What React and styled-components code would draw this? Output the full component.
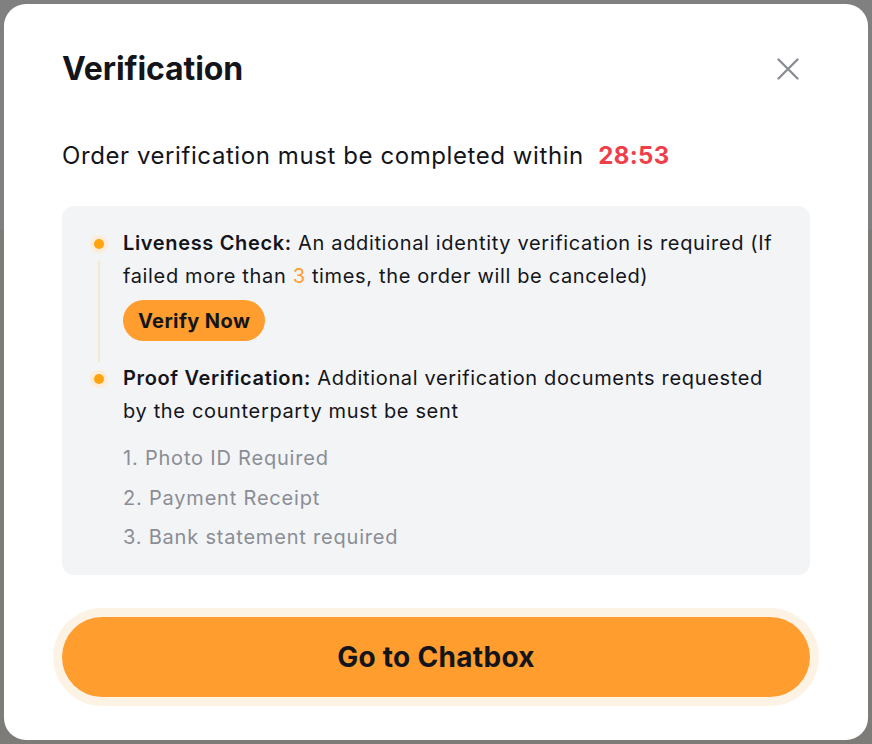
import React from "react";
import styled, { createGlobalStyle } from "styled-components";

const Global = createGlobalStyle`
  html, body { margin: 0; padding: 0; }
  body {
    background: #808080;
    font-family: Inter, "Noto Sans", "Liberation Sans", sans-serif;
    -webkit-font-smoothing: antialiased;
  }
`;

const Backdrop = styled.div`
  width: 872px;
  height: 744px;
  box-sizing: border-box;
  padding: 4px;
  background: linear-gradient(#808080 0 230px, #7e7c79 230px);
`;

const Modal = styled.div`
  width: 864px;
  height: 736px;
  box-sizing: border-box;
  background: #ffffff;
  border-radius: 22px;
  padding: 45px 58px 0 58px;
  display: flex;
  flex-direction: column;
  color: #14151a;
`;

const Header = styled.div`
  display: flex;
  align-items: center;
  justify-content: space-between;
  height: 40px;
`;

const Title = styled.h2`
  margin: 0;
  font-size: 32px;
  line-height: 40px;
  font-weight: 700;
  letter-spacing: -0.1px;
`;

const CloseButton = styled.button`
  width: 32px;
  height: 32px;
  margin-right: 6px;
  padding: 0;
  border: 0;
  background: transparent;
  display: flex;
  align-items: center;
  justify-content: center;
  cursor: pointer;
`;

const Subtitle = styled.p`
  margin: 51px 0 0 0;
  font-size: 24px;
  line-height: 32px;
  font-weight: 400;
  letter-spacing: 0.58px;
`;

const Timer = styled.span`
  color: #ef3f4a;
  font-weight: 700;
  margin-left: 7px;
  letter-spacing: 0.4px;
`;

const InfoBox = styled.div`
  margin-top: 34px;
  background: #f3f4f6;
  border-radius: 12px;
  padding: 21px 28px 17px 28px;
  display: flex;
  flex-direction: column;
`;

const Step = styled.div`
  display: flex;
  gap: 15px;
  padding-bottom: ${(p) => (p.$last ? 0 : 21)}px;
`;

const Rail = styled.div`
  width: 18px;
  flex: none;
  display: flex;
  flex-direction: column;
  align-items: center;
`;

const Dot = styled.span`
  margin-top: 7.5px;
  width: 18px;
  height: 18px;
  border-radius: 50%;
  background: #fcecd8;
  display: flex;
  align-items: center;
  justify-content: center;
  flex: none;
  &::after {
    content: "";
    width: 10px;
    height: 10px;
    border-radius: 50%;
    background: #ffa30f;
  }
`;

const Line = styled.span`
  flex: 1;
  width: 2px;
  margin-top: 8px;
  margin-bottom: -21px;
  background: #f6e7d2;
`;

const StepBody = styled.div`
  flex: 1;
  font-size: 20px;
  line-height: 33px;
  color: #14151a;
  letter-spacing: 0.65px;
`;

const Label = styled.strong`
  font-weight: 600;
`;

const Accent = styled.span`
  color: #ff9d2e;
`;

const VerifyButton = styled.button`
  margin-top: 7px;
  height: 41px;
  padding: 0 15px;
  border: 0;
  border-radius: 21px;
  background: #ff9d2e;
  color: #14151a;
  font-family: inherit;
  font-size: 20px;
  font-weight: 700;
  letter-spacing: 0.4px;
  display: block;
  cursor: pointer;
`;

const DocList = styled.ol`
  list-style: none;
  margin: 11px 0 0 0;
  padding: 0;
`;

const DocItem = styled.li`
  font-size: 20px;
  line-height: 39.5px;
  color: #8a8d95;
  letter-spacing: 0.8px;
`;

const Primary = styled.button`
  margin-top: 42px;
  height: 80px;
  width: 100%;
  border: 0;
  border-radius: 40px;
  background: #ff9d2e;
  box-shadow: 0 0 0 9px #fdf3e4;
  color: #14151a;
  font-family: inherit;
  font-size: 28px;
  font-weight: 700;
  letter-spacing: 0.3px;
  cursor: pointer;
`;

const CloseIcon = () => (
  <svg width="22" height="22" viewBox="0 0 22 22" fill="none">
    <path d="M1.5 1.5L20.5 20.5M20.5 1.5L1.5 20.5" stroke="#898c93" strokeWidth="2.3" strokeLinecap="round" />
  </svg>
);

export default function App() {
  return (
    <>
      <Global />
      <Backdrop>
        <Modal>
          <Header>
            <Title>Verification</Title>
            <CloseButton aria-label="Close">
              <CloseIcon />
            </CloseButton>
          </Header>
          <Subtitle>
            Order verification must be completed within <Timer>28:53</Timer>
          </Subtitle>
          <InfoBox>
            <Step>
              <Rail>
                <Dot />
                <Line />
              </Rail>
              <StepBody>
                <Label>Liveness Check:</Label> An additional identity verification is required (If
                failed more than <Accent>3</Accent> times, the order will be canceled)
                <VerifyButton>Verify Now</VerifyButton>
              </StepBody>
            </Step>
            <Step $last>
              <Rail>
                <Dot />
              </Rail>
              <StepBody>
                <Label>Proof Verification:</Label> Additional verification documents requested by the
                counterparty must be sent
                <DocList>
                  <DocItem>1. Photo ID Required</DocItem>
                  <DocItem>2. Payment Receipt</DocItem>
                  <DocItem>3. Bank statement required</DocItem>
                </DocList>
              </StepBody>
            </Step>
          </InfoBox>
          <Primary>Go to Chatbox</Primary>
        </Modal>
      </Backdrop>
    </>
  );
}
